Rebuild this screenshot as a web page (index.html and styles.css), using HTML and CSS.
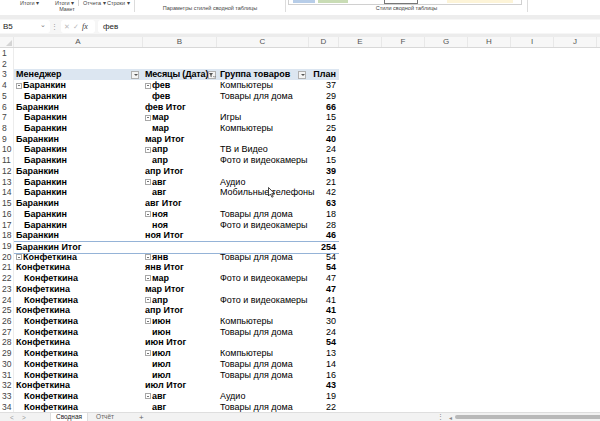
FILE: index.html
```html
<!DOCTYPE html>
<html lang="ru">
<head>
<meta charset="utf-8">
<title>Сводная</title>
<link rel="stylesheet" href="styles.css">
</head>
<body>
<div class="ribbon">
  <div class="grp g1">
    <div class="btns"><span>Итоги ▾</span><span>Итоги ▾</span><i class="vsep"></i><span>Отчета ▾</span><span>Строки ▾</span></div>
    <div class="glabel">Макет</div>
  </div>
  <div class="grp g2">
    <div class="btns"></div>
    <div class="glabel">Параметры стилей сводной таблицы</div>
  </div>
  <div class="grp g3">
    <div class="gallery"><i class="sw s1"></i><i class="sw s2"></i><i class="sw s3"></i><i class="sw s4"></i><i class="sw s5"></i></div>
    <div class="glabel">Стили сводной таблицы</div>
  </div>
  <div class="grp g4"></div>
</div>
<div class="band"></div>
<div class="fbar">
  <div class="namebox"><span>B5</span><span class="chev">⌄</span></div>
  <span class="dots">⋮</span>
  <div class="fxbox"><span class="x">✕</span><span class="x">✓</span><span class="fx">fx</span></div>
  <div class="finput">фев</div>
</div>
<div class="band2"></div>
<div class="colhdr">
  <span class="corner"></span><span>A</span><span>B</span><span>C</span><span>D</span><span>E</span><span>F</span><span>G</span><span>H</span><span>I</span><span>J</span>
</div>
<div class="sheet">
  <div class="row"><span class="rn">1</span></div>
  <div class="row"><span class="rn">2</span></div>
  <div class="row hdr"><span class="rn">3</span><span class="c a"><span>Менеджер</span><i class="fb dd"></i></span><span class="c b"><span class="nb">Месяцы (Дата)</span><i class="fb fl"><svg viewBox="0 0 8 8" width="8" height="8"><path d="M1 2h4L3.6 4v2.2L2.4 5.6V4z" fill="#555"/><path d="M5.4 5.2l1 1 1-1" fill="none" stroke="#555" stroke-width=".8"/></svg></i></span><span class="c cc"><span>Группа товаров</span><i class="fb dd"></i></span><span class="c d">План</span></div>
  <div class="row"><span class="rn">4</span><span class="c a"><i class="tg"></i>Баранкин</span><span class="c b"><i class="tg"></i>фев</span><span class="c cc">Компьютеры</span><span class="c d">37</span></div>
  <div class="row"><span class="rn">5</span><span class="c a in">Баранкин</span><span class="c b in">фев</span><span class="c cc">Товары для дома</span><span class="c d">29</span></div>
  <div class="row"><span class="rn">6</span><span class="c a">Баранкин</span><span class="c b">фев Итог</span><span class="c cc"></span><span class="c d t">66</span></div>
  <div class="row"><span class="rn">7</span><span class="c a in">Баранкин</span><span class="c b"><i class="tg"></i>мар</span><span class="c cc">Игры</span><span class="c d">15</span></div>
  <div class="row"><span class="rn">8</span><span class="c a in">Баранкин</span><span class="c b in">мар</span><span class="c cc">Компьютеры</span><span class="c d">25</span></div>
  <div class="row"><span class="rn">9</span><span class="c a">Баранкин</span><span class="c b">мар Итог</span><span class="c cc"></span><span class="c d t">40</span></div>
  <div class="row"><span class="rn">10</span><span class="c a in">Баранкин</span><span class="c b"><i class="tg"></i>апр</span><span class="c cc">ТВ и Видео</span><span class="c d">24</span></div>
  <div class="row"><span class="rn">11</span><span class="c a in">Баранкин</span><span class="c b in">апр</span><span class="c cc">Фото и видеокамеры</span><span class="c d">15</span></div>
  <div class="row"><span class="rn">12</span><span class="c a">Баранкин</span><span class="c b">апр Итог</span><span class="c cc"></span><span class="c d t">39</span></div>
  <div class="row"><span class="rn">13</span><span class="c a in">Баранкин</span><span class="c b"><i class="tg"></i>авг</span><span class="c cc">Аудио</span><span class="c d">21</span></div>
  <div class="row"><span class="rn">14</span><span class="c a in">Баранкин</span><span class="c b in">авг</span><span class="c cc">Мобильные телефоны</span><span class="c d">42</span></div>
  <div class="row"><span class="rn">15</span><span class="c a">Баранкин</span><span class="c b">авг Итог</span><span class="c cc"></span><span class="c d t">63</span></div>
  <div class="row"><span class="rn">16</span><span class="c a in">Баранкин</span><span class="c b"><i class="tg"></i>ноя</span><span class="c cc">Товары для дома</span><span class="c d">18</span></div>
  <div class="row"><span class="rn">17</span><span class="c a in">Баранкин</span><span class="c b in">ноя</span><span class="c cc">Фото и видеокамеры</span><span class="c d">28</span></div>
  <div class="row"><span class="rn">18</span><span class="c a">Баранкин</span><span class="c b">ноя Итог</span><span class="c cc"></span><span class="c d t">46</span></div>
  <div class="row grand"><span class="rn">19</span><span class="c a">Баранкин Итог</span><span class="c b"></span><span class="c cc"></span><span class="c d t">254</span></div>
  <div class="row"><span class="rn">20</span><span class="c a"><i class="tg"></i>Конфеткина</span><span class="c b"><i class="tg"></i>янв</span><span class="c cc">Товары для дома</span><span class="c d">54</span></div>
  <div class="row"><span class="rn">21</span><span class="c a">Конфеткина</span><span class="c b">янв Итог</span><span class="c cc"></span><span class="c d t">54</span></div>
  <div class="row"><span class="rn">22</span><span class="c a in">Конфеткина</span><span class="c b"><i class="tg"></i>мар</span><span class="c cc">Фото и видеокамеры</span><span class="c d">47</span></div>
  <div class="row"><span class="rn">23</span><span class="c a">Конфеткина</span><span class="c b">мар Итог</span><span class="c cc"></span><span class="c d t">47</span></div>
  <div class="row"><span class="rn">24</span><span class="c a in">Конфеткина</span><span class="c b"><i class="tg"></i>апр</span><span class="c cc">Фото и видеокамеры</span><span class="c d">41</span></div>
  <div class="row"><span class="rn">25</span><span class="c a">Конфеткина</span><span class="c b">апр Итог</span><span class="c cc"></span><span class="c d t">41</span></div>
  <div class="row"><span class="rn">26</span><span class="c a in">Конфеткина</span><span class="c b"><i class="tg"></i>июн</span><span class="c cc">Компьютеры</span><span class="c d">30</span></div>
  <div class="row"><span class="rn">27</span><span class="c a in">Конфеткина</span><span class="c b in">июн</span><span class="c cc">Товары для дома</span><span class="c d">24</span></div>
  <div class="row"><span class="rn">28</span><span class="c a">Конфеткина</span><span class="c b">июн Итог</span><span class="c cc"></span><span class="c d t">54</span></div>
  <div class="row"><span class="rn">29</span><span class="c a in">Конфеткина</span><span class="c b"><i class="tg"></i>июл</span><span class="c cc">Компьютеры</span><span class="c d">13</span></div>
  <div class="row"><span class="rn">30</span><span class="c a in">Конфеткина</span><span class="c b in">июл</span><span class="c cc">Товары для дома</span><span class="c d">14</span></div>
  <div class="row"><span class="rn">31</span><span class="c a in">Конфеткина</span><span class="c b in">июл</span><span class="c cc">Товары для дома</span><span class="c d">16</span></div>
  <div class="row"><span class="rn">32</span><span class="c a">Конфеткина</span><span class="c b">июл Итог</span><span class="c cc"></span><span class="c d t">43</span></div>
  <div class="row"><span class="rn">33</span><span class="c a in">Конфеткина</span><span class="c b"><i class="tg"></i>авг</span><span class="c cc">Аудио</span><span class="c d">19</span></div>
  <div class="row"><span class="rn">34</span><span class="c a in">Конфеткина</span><span class="c b in">авг</span><span class="c cc">Товары для дома</span><span class="c d">22</span></div>
  <svg class="cursor" viewBox="0 0 7 11" width="7" height="11"><path d="M.5.5v8.5l2-2 1.4 3.2 1.3-.6-1.4-3H6.5z" fill="#fff" stroke="#000" stroke-width=".7"/></svg>
</div>
<div class="tabs">
  <span class="nav">&lt;</span><span class="nav">&gt;</span>
  <span class="tab active">Сводная</span><span class="tab">Отчёт</span><span class="plus">+</span>
  <span class="spacer"></span>
  <span class="sdots">⋮</span>
  <div class="hscroll"><span class="arr">◂</span><i class="thumb"></i></div>
</div>
</body>
</html>
```
FILE: styles.css
```css
* { box-sizing: border-box; }
body {
  margin: 0;
  width: 600px;
  height: 421px;
  overflow: hidden;
  font-family: "Liberation Sans", Arial, sans-serif;
  background: #fff;
  display: flex;
  flex-direction: column;
  color: #000;
}
/* ribbon */
.ribbon {
  height: 15px;
  flex: none;
  display: flex;
  background: #fff;
  border-radius: 0 0 6px 6px;
  overflow: hidden;
  font-size: 5.5px;
  color: #444;
}
.grp {
  display: flex;
  flex-direction: column;
  justify-content: space-between;
  align-items: center;
  border-right: 1px solid #dcdcdc;
  margin: 0 0 3px;
}
.g1 { width: 135px; }
.g2 { width: 151px; }
.g3 { width: 242px; }
.g4 { flex: 1; border-right: none; }
.btns {
  display: flex;
  height: 6px;
  align-items: flex-start;
  width: 100%;
  padding-left: 20px;
  line-height: 6px;
}
.btns span { width: 35px; white-space: nowrap; }
.btns span:nth-child(2) { width: 23px; }
.btns span:nth-child(4) { width: 24px; }
.btns span:nth-child(5) { width: 24px; }
.vsep { width: 1px; height: 6px; background: #d6d6d6; margin-right: 4px; }
.glabel { line-height: 7px; white-space: nowrap; }
.gallery {
  display: flex;
  align-items: flex-start;
  width: 234px;
  height: 5px;
  border: 1px solid #d0d0d0;
  border-top: none;
  padding: 0 4px;
  gap: 3px;
  margin-left: -4px;
}
.sw { height: 3px; display: block; }
.s1 { width: 22px; background: #b7cde8; }
.s2 { width: 30px; background: #c9dcb5; }
.s3 { width: 28px; background: #fff; }
.s4 { width: 34px; background: #fff; border: 1px solid #777; border-top: none; height: 4px; margin-left: 2px; }
.s5 { width: 66px; background: #fdf4d8; margin-left: 26px; }
.band { height: 4px; flex: none; background: #ededed; }
/* formula bar */
.fbar {
  height: 15px;
  flex: none;
  display: flex;
  align-items: center;
  background: #f6f6f6;
  font-size: 8px;
  color: #222;
  padding: 1px 0;
}
.namebox {
  width: 50px;
  height: 100%;
  background: #fff;
  display: flex;
  align-items: center;
  justify-content: space-between;
  padding: 0 4px 0 3px;
  border-radius: 0 3px 3px 0;
}
.chev { color: #777; font-size: 7px; margin-top: -3px; }
.dots { color: #999; font-size: 7px; margin: 0 3px 0 1px; }
.fxbox {
  width: 34px;
  height: 100%;
  display: flex;
  align-items: center;
  gap: 3px;
  padding-left: 3px;
  background: #fff;
  border-radius: 3px;
}
.fxbox .x { color: #bbb; font-size: 7px; }
.fx { font-family: "Liberation Serif", serif; font-style: italic; font-size: 8px; color: #333; }
.finput {
  flex: 1;
  height: 100%;
  margin-left: 3px;
  background: #fff;
  border-radius: 3px 0 0 3px;
  padding-left: 5px;
  line-height: 13px;
}
.band2 { height: 3px; flex: none; background: #ececec; }
/* grid */
.colhdr, .row {
  display: grid;
  grid-template-columns: 14px 129px 74px 92px 30px 43px 43px 43px 43px 43px 43px;
}
.colhdr {
  height: 11px;
  flex: none;
  background: #f7f7f7;
  border-bottom: 1px solid #d8d8d8;
  font-size: 8px;
  color: #555;
  line-height: 10px;
}
.colhdr span { text-align: center; border-right: 1px solid #e8e8e8; }
.corner { position: relative; }
.corner::after {
  content: "";
  position: absolute;
  right: 1px;
  bottom: 1px;
  border-left: 6px solid transparent;
  border-bottom: 6px solid #d4d4d4;
}
.sheet {
  flex: 1;
  overflow: hidden;
  position: relative;
}
.row {
  height: 10.72px;
  font-size: 9px;
  line-height: 10.72px;
  white-space: nowrap;
}
.rn { color: #444; font-size: 8.5px; padding-left: 2px; border-right: 1px solid #ececec; }
.c { display: flex; align-items: center; }
.a { font-weight: bold; padding-left: 2px; }
.b { font-weight: bold; padding-left: 2px; }
.in { padding-left: 10px; }
.b.in { padding-left: 9px; }
.cc { padding-left: 3px; }
.d { justify-content: flex-end; padding-right: 3px; }
.t { font-weight: bold; }
.tg {
  display: inline-block;
  width: 6px;
  height: 6px;
  border: 1px solid #a8a8a8;
  margin-right: 1px;
  position: relative;
  background: #fff;
}
.tg::after {
  content: "";
  position: absolute;
  left: 1px;
  right: 1px;
  top: 1.5px;
  height: 1px;
  background: #777;
}
.hdr .c { background: #dce6f1; font-weight: bold; justify-content: space-between; }
.hdr .d { justify-content: flex-end; }
.nb { letter-spacing: -0.15px; }
.fb {
  display: inline-block;
  flex: none;
  width: 8px;
  height: 8px;
  border: 1px solid #b0b0b0;
  background: #f4f4f4;
  margin-right: 4px;
  position: relative;
}
.hdr .cc .fb { margin-right: 3px; }
.fb.dd::after {
  content: "";
  position: absolute;
  left: 1.5px;
  top: 2.5px;
  border-left: 2px solid transparent;
  border-right: 2px solid transparent;
  border-top: 2px solid #555;
}
.fb svg { position: absolute; left: -1px; top: -1px; }
.grand .c {
  border-top: 1px solid #95b3d7;
  border-bottom: 1px solid #95b3d7;
  font-weight: bold;
}
.cursor { position: absolute; left: 268px; top: 139px; }
/* tabs */
.tabs {
  height: 9px;
  flex: none;
  display: flex;
  align-items: center;
  background: #f2f2f2;
  border-top: 1px solid #dedede;
  font-size: 6.5px;
  color: #444;
}
.nav { color: #999; margin-left: 10px; width: 6px; }
.nav + .nav { margin-left: 6px; }
.tab { padding: 0 5px; height: 100%; line-height: 8px; }
.tab.active {
  margin-left: 22px;
  background: #fff;
  color: #222;
  border-left: 1px solid #ddd;
  border-right: 1px solid #ddd;
}
.tab + .tab { margin-left: 3px; color: #666; }
.plus { margin-left: 20px; color: #666; font-size: 8px; }
.spacer { flex: 1; }
.sdots { color: #888; width: 12px; }
.hscroll { width: 151px; display: flex; align-items: center; }
.arr { color: #888; font-size: 6px; width: 6px; }
.thumb { flex: 1; height: 4px; background: #b9b9b9; border-radius: 2px 0 0 2px; display: block; }
```
